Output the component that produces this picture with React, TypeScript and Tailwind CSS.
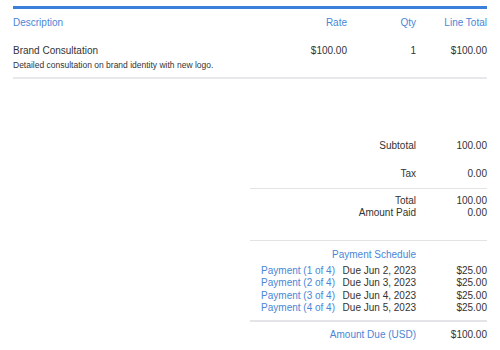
const payments = [
  { label: "Payment (1 of 4)", due: "Due Jun 2, 2023", amount: "$25.00" },
  { label: "Payment (2 of 4)", due: "Due Jun 3, 2023", amount: "$25.00" },
  { label: "Payment (3 of 4)", due: "Due Jun 4, 2023", amount: "$25.00" },
  { label: "Payment (4 of 4)", due: "Due Jun 5, 2023", amount: "$25.00" },
];

function TotalRow({ label, value }: { label: string; value: string }) {
  return (
    <div className="flex justify-end leading-[12px]">
      <span className="text-right">{label}</span>
      <span className="w-[71px] text-right">{value}</span>
    </div>
  );
}

export default function App() {
  return (
    <div className="h-[350px] w-[500px] bg-white px-[13px] pt-[6px] text-[10px] text-[#333] [font-family:'Liberation_Sans',Arial,sans-serif]">
      <div className="border-t-[3px] border-[#3a7fd9]">
        {/* header */}
        <div className="flex pt-[8px] leading-[12px] text-[#4a86d6]">
          <div className="flex-1">Description</div>
          <div className="w-[100px] text-right">Rate</div>
          <div className="w-[69px] text-right">Qty</div>
          <div className="w-[71px] text-right">Line Total</div>
        </div>

        {/* line item */}
        <div className="border-b-2 border-[#e8e8ec] pb-[6px] pt-[16px]">
          <div className="flex leading-[12px]">
            <div className="flex-1">Brand Consultation</div>
            <div className="w-[100px] text-right">$100.00</div>
            <div className="w-[69px] text-right">1</div>
            <div className="w-[71px] text-right">$100.00</div>
          </div>
          <div className="mt-[3px] text-[8.5px] leading-[11px]">
            Detailed consultation on brand identity with new logo.
          </div>
        </div>

        {/* totals */}
        <div className="ml-auto mt-[61px] w-[237px]">
          <TotalRow label="Subtotal" value="100.00" />
          <div className="mt-[16px] border-b border-[#e3e3e3] pb-[8px]">
            <TotalRow label="Tax" value="0.00" />
          </div>
          <div className="border-b border-[#e3e3e3] pb-[21px] pt-[6px]">
            <TotalRow label="Total" value="100.00" />
            <TotalRow label="Amount Paid" value="0.00" />
          </div>

          <div className="border-b-2 border-[#e3e3e8] pb-[5px] pt-[8px]">
            <div className="flex justify-end leading-[12px] text-[#4a86d6]">
              <span>Payment Schedule</span>
              <span className="w-[71px]" />
            </div>
            <div className="mt-[4px]">
              {payments.map((p) => (
                <div key={p.label} className="flex justify-end leading-[12.4px]">
                  <span className="text-[#4a86d6]">{p.label}</span>
                  <span className="w-[81px] text-right">{p.due}</span>
                  <span className="w-[71px] text-right">{p.amount}</span>
                </div>
              ))}
            </div>
          </div>

          <div className="flex justify-end pt-[7px] leading-[12px]">
            <span className="text-[#4a86d6]">Amount Due (USD)</span>
            <span className="w-[71px] text-right">$100.00</span>
          </div>
        </div>
      </div>
    </div>
  );
}
